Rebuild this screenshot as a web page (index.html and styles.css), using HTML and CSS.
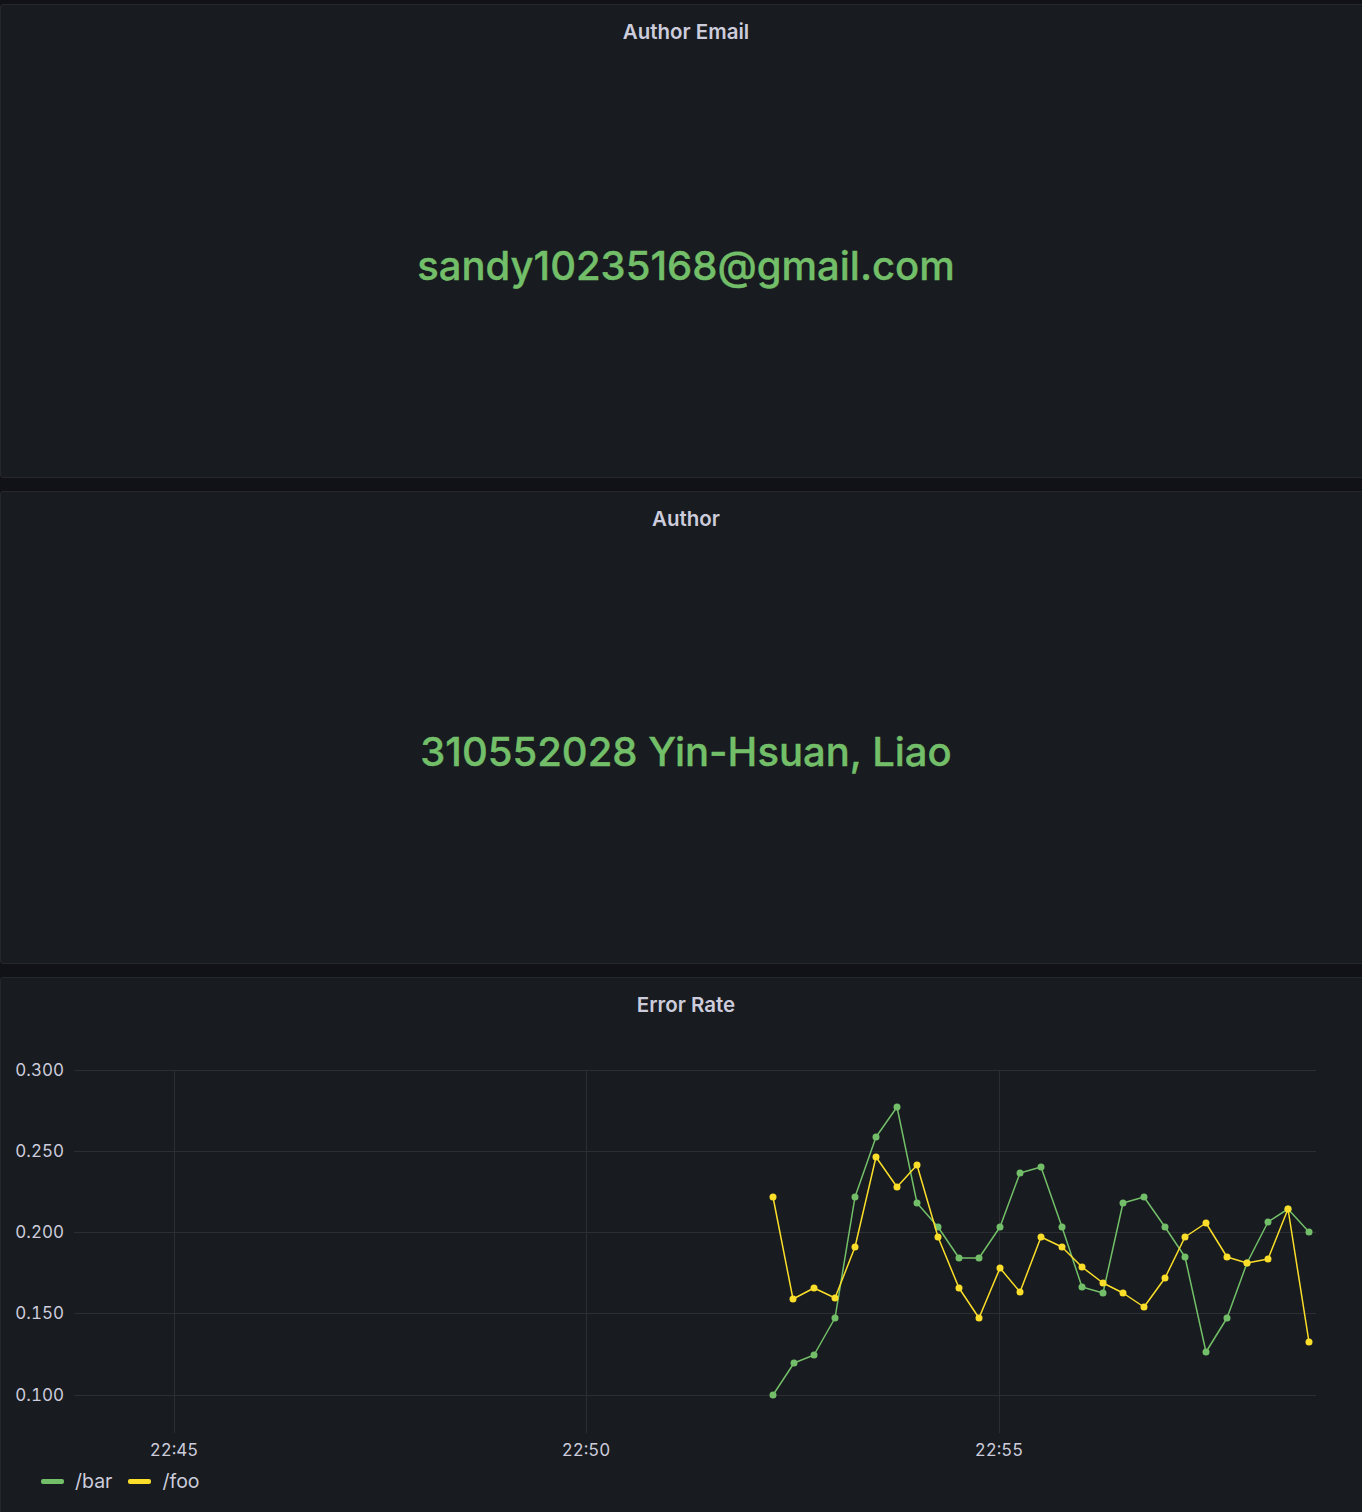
FILE: index.html
```html
<!DOCTYPE html>
<html>
<head>
<meta charset="utf-8">
<link rel="stylesheet" href="styles.css">
</head>
<body>
<div class="dashboard">
  <section class="panel stat-panel">
    <div class="panel-title">Author Email</div>
    <div class="stat-body"><span class="stat-value">sandy10235168@gmail.com</span></div>
  </section>
  <section class="panel stat-panel">
    <div class="panel-title">Author</div>
    <div class="stat-body"><span class="stat-value">310552028 Yin-Hsuan, Liao</span></div>
  </section>
  <section class="panel graph-panel">
    <div class="panel-title">Error Rate</div>
    <svg class="chart" width="1364" height="444" viewBox="1 1021 1364 444" xmlns="http://www.w3.org/2000/svg">
      <defs>
        <marker id="dot-g" markerWidth="8" markerHeight="8" refX="4" refY="4" markerUnits="userSpaceOnUse">
          <circle cx="4" cy="4" r="3.5" fill="#73bf69"/>
        </marker>
        <marker id="dot-y" markerWidth="8" markerHeight="8" refX="4" refY="4" markerUnits="userSpaceOnUse">
          <circle cx="4" cy="4" r="3.5" fill="#fade2a"/>
        </marker>
      </defs>
      <g class="grid">
        <line x1="74" y1="1070.5" x2="1316" y2="1070.5"/>
        <line x1="74" y1="1151.5" x2="1316" y2="1151.5"/>
        <line x1="74" y1="1232.5" x2="1316" y2="1232.5"/>
        <line x1="74" y1="1313.5" x2="1316" y2="1313.5"/>
        <line x1="74" y1="1395.5" x2="1316" y2="1395.5"/>
        <line x1="174.5" y1="1070" x2="174.5" y2="1433"/>
        <line x1="586.5" y1="1070" x2="586.5" y2="1433"/>
        <line x1="999.5" y1="1070" x2="999.5" y2="1433"/>
      </g>
      <g class="axis-y">
        <text x="64" y="1069.5">0.300</text>
        <text x="64" y="1150.5">0.250</text>
        <text x="64" y="1231.5">0.200</text>
        <text x="64" y="1312.5">0.150</text>
        <text x="64" y="1394.5">0.100</text>
      </g>
      <g class="axis-x">
        <text x="174" y="1449.5">22:45</text>
        <text x="586" y="1449.5">22:50</text>
        <text x="999" y="1449.5">22:55</text>
      </g>
      <polyline class="series series-bar" marker-start="url(#dot-g)" marker-mid="url(#dot-g)" marker-end="url(#dot-g)"
        points="773,1395 794,1363 814,1355 835,1318 855,1197 876,1137 897,1107 917,1203 938,1227 959,1258 979,1258 1000,1227 1020,1173 1041,1167 1062,1227 1082,1287 1103,1293 1123,1203 1144,1197 1165,1227 1185,1257 1206,1352 1227,1318 1247,1263 1268,1222 1288,1209 1309,1232"/>
      <polyline class="series series-foo" marker-start="url(#dot-y)" marker-mid="url(#dot-y)" marker-end="url(#dot-y)"
        points="773,1197 793,1299 814,1288 835,1298 855,1247 876,1157 897,1187 917,1165 938,1237 959,1288 979,1318 1000,1268 1020,1292 1041,1237 1062,1247 1082,1267 1103,1283 1123,1293 1144,1307 1165,1278 1185,1237 1206,1223 1227,1257 1247,1263 1268,1259 1288,1209 1309,1342"/>
    </svg>
    <div class="legend">
      <div class="legend-item"><span class="legend-swatch swatch-bar"></span><span>/bar</span></div>
      <div class="legend-item"><span class="legend-swatch swatch-foo"></span><span>/foo</span></div>
    </div>
  </section>
</div>
</body>
</html>
```
FILE: styles.css
```css
html, body {
  margin: 0;
  padding: 0;
  background: #111217;
  overflow: hidden;
}

body {
  font-family: Inter, Roboto, "Liberation Sans", sans-serif;
  color: #ccccdc;
  width: 1362px;
  height: 1512px;
}

.dashboard {
  padding-top: 4px;
  display: flex;
  flex-direction: column;
  gap: 13px;
  width: 1372px;
}

.panel {
  background: #181b1f;
  border: 1px solid #25272c;
  border-radius: 3px;
  display: flex;
  flex-direction: column;
  box-sizing: border-box;
}

.stat-panel:nth-child(1) {
  height: 474px;
}

.stat-panel:nth-child(2) {
  height: 473px;
}

.graph-panel {
  height: 540px;
}

.panel-title {
  margin-top: 11px;
  height: 32px;
  line-height: 32px;
  text-align: center;
  font-size: 20.5px;
  font-weight: 600;
  color: #ccccdc;
  flex: none;
}

.stat-body {
  flex: 1;
  display: flex;
  align-items: center;
  justify-content: center;
  padding-top: 6px;
}

.stat-value {
  font-size: 40px;
  font-weight: 500;
  color: #73bf69;
  line-height: 1;
  -webkit-text-stroke: 0.4px #73bf69;
}

.chart {
  display: block;
  flex: none;
}

.grid line {
  stroke: #2c2e33;
  stroke-width: 1;
}

.axis-y text,
.axis-x text {
  font-family: Inter, Roboto, "Liberation Sans", sans-serif;
  font-variant-numeric: tabular-nums;
  font-size: 17px;
  fill: #ccccdc;
  dominant-baseline: central;
}

.axis-y text {
  text-anchor: end;
}

.axis-x text {
  text-anchor: middle;
}

.series {
  fill: none;
  stroke-width: 1.5;
  stroke-linejoin: round;
}

.series-bar {
  stroke: #73bf69;
}

.series-foo {
  stroke: #fade2a;
}

.legend {
  display: flex;
  align-items: center;
  gap: 16px;
  padding-left: 40px;
  padding-top: 0;
  height: 32px;
  font-size: 19.5px;
  color: #ccccdc;
}

.legend-item {
  display: flex;
  align-items: center;
  gap: 11px;
}

.legend-swatch {
  width: 23px;
  height: 5px;
  border-radius: 2px;
}

.swatch-bar {
  background: #73bf69;
}

.swatch-foo {
  background: #fade2a;
}
```
